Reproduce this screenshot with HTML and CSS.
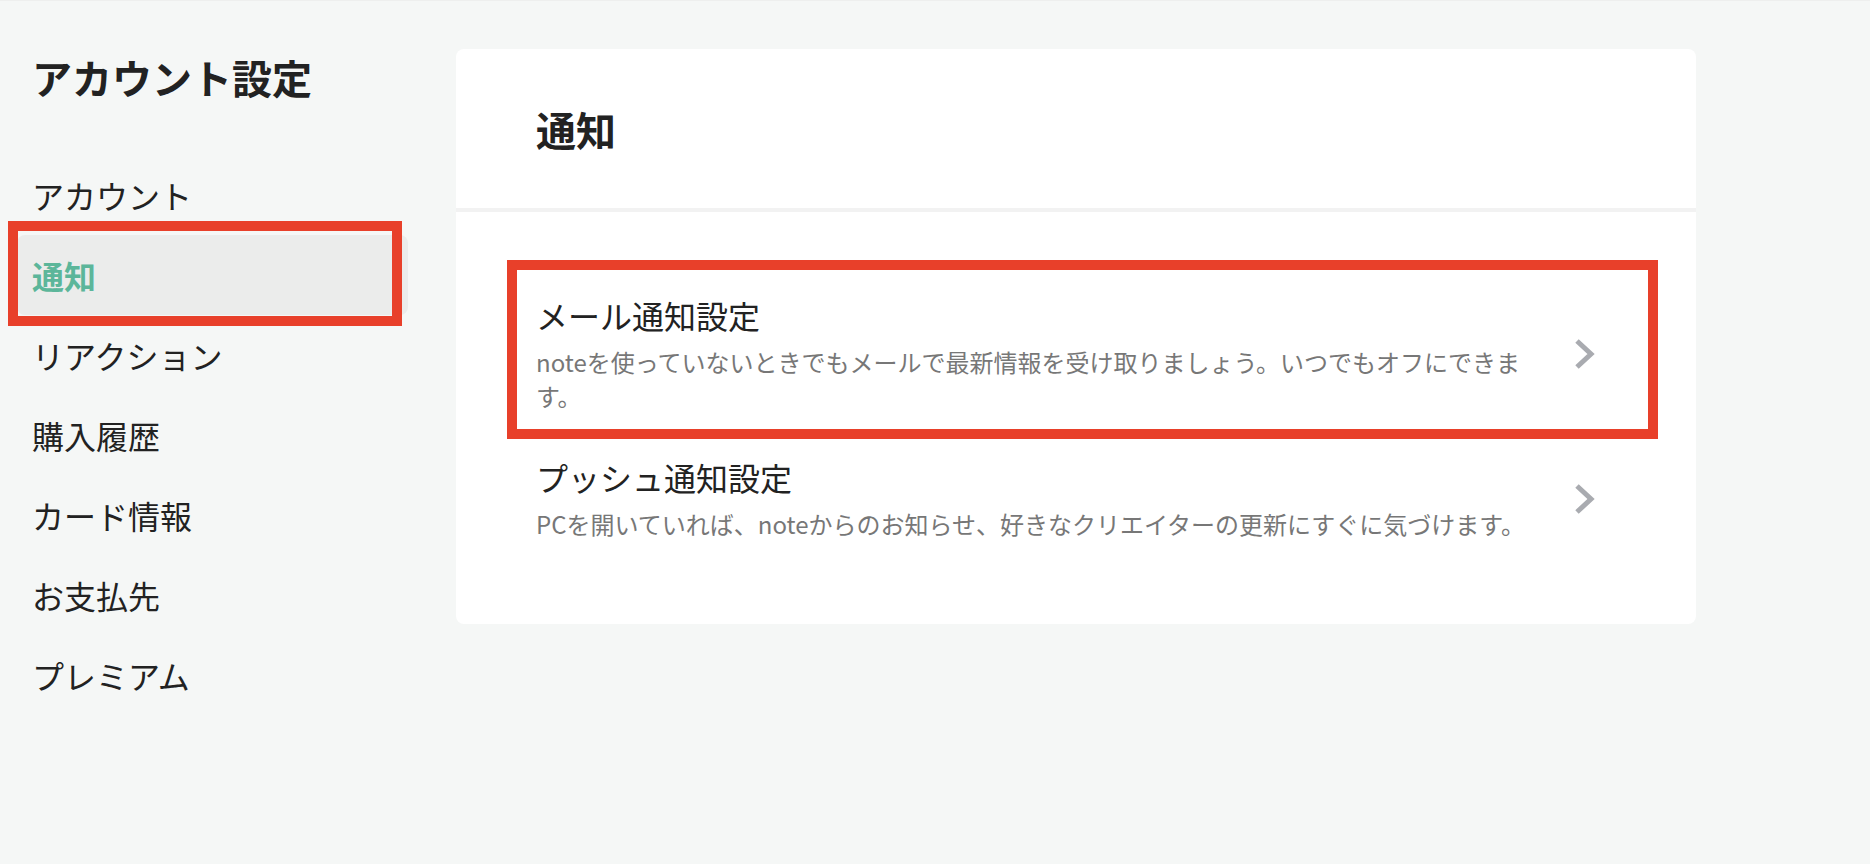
FILE: index.html
```html
<!DOCTYPE html>
<html lang="ja">
<head>
<meta charset="utf-8">
<title>通知 - アカウント設定</title>
<link rel="stylesheet" href="styles.css">
</head>
<body>
<div class="page">
  <aside class="sidebar">
    <h1 class="sidebar-title">アカウント設定</h1>
    <nav class="menu">
      <a class="menu-item">アカウント</a>
      <a class="menu-item active highlight-side">通知</a>
      <a class="menu-item">リアクション</a>
      <a class="menu-item">購入履歴</a>
      <a class="menu-item">カード情報</a>
      <a class="menu-item">お支払先</a>
      <a class="menu-item">プレミアム</a>
    </nav>
  </aside>
  <main class="card">
    <header class="card-header">
      <h2 class="card-title">通知</h2>
    </header>
    <div class="card-body">
      <a class="row highlight-row">
        <div class="row-text">
          <div class="row-title">メール通知設定</div>
          <p class="row-desc">noteを使っていないときでもメールで最新情報を受け取りましょう。いつでもオフにできます。</p>
        </div>
        <svg class="chevron" viewBox="0 0 22 30" width="22" height="30" aria-hidden="true"><polyline points="2,2 16,15 2,28" fill="none" stroke="#a9abb0" stroke-width="5"/></svg>
      </a>
      <a class="row">
        <div class="row-text">
          <div class="row-title">プッシュ通知設定</div>
          <p class="row-desc">PCを開いていれば、noteからのお知らせ、好きなクリエイターの更新にすぐに気づけます。</p>
        </div>
        <svg class="chevron" viewBox="0 0 22 30" width="22" height="30" aria-hidden="true"><polyline points="2,2 16,15 2,28" fill="none" stroke="#a9abb0" stroke-width="5"/></svg>
      </a>
    </div>
  </main>
</div>
</body>
</html>
```

FILE: styles.css
```css
*, *::before, *::after { box-sizing: border-box; }

html, body {
  margin: 0;
  padding: 0;
}

body {
  background: #f5f7f6;
  border-top: 1px solid #eeefee;
  font-family: "Noto Sans CJK JP", "Noto Sans", sans-serif;
  color: #222222;
  min-height: 864px;
}

.page {
  display: flex;
  align-items: flex-start;
  gap: 48px;
  padding-left: 17px;
}

/* Sidebar */
.sidebar {
  width: 391px;
  flex: none;
  padding-top: 46px;
}

.sidebar-title {
  margin: 0 0 48px;
  padding-left: 15px;
  font-size: 40px;
  line-height: 60px;
  font-weight: 700;
  color: #222222;
}

.menu {
  display: flex;
  flex-direction: column;
}

.menu-item {
  position: relative;
  display: flex;
  align-items: center;
  height: 80px;
  padding: 0 15px;
  font-size: 32px;
  color: #222222;
  border-radius: 8px;
  text-decoration: none;
}

.menu-item.active {
  background: #ebeceb;
  color: #5cb69a;
  font-weight: 700;
}

.highlight-side::after {
  content: "";
  position: absolute;
  left: -9px;
  top: -14px;
  width: 394px;
  height: 105px;
  border: 10px solid #e8402a;
  pointer-events: none;
}

/* Card */
.card {
  width: 1240px;
  margin-top: 48px;
  background: #ffffff;
  border-radius: 8px;
}

.card-header {
  height: 163px;
  display: flex;
  align-items: center;
  padding: 0 80px;
  border-bottom: 4px solid #f2f2f2;
}

.card-title {
  margin: 0;
  font-size: 40px;
  line-height: 60px;
  font-weight: 700;
  color: #222222;
}

.card-body {
  padding: 59px 80px 63px;
}

.row {
  position: relative;
  display: flex;
  align-items: center;
  padding: 20px 19px 20px 0;
  text-decoration: none;
  color: inherit;
}

.row-text {
  flex: 1;
  margin-right: 42px;
}

.row-title {
  font-size: 32px;
  line-height: 48px;
  color: #222222;
}

.row-desc {
  margin: 6px 0 0;
  font-size: 24px;
  line-height: 34px;
  color: #777777;
}

.chevron {
  flex: none;
  display: block;
  margin-top: 4px;
}

.highlight-row::after {
  content: "";
  position: absolute;
  left: -29px;
  top: -11px;
  right: -42px;
  bottom: -6px;
  border: 10px solid #e8402a;
  pointer-events: none;
}
```
